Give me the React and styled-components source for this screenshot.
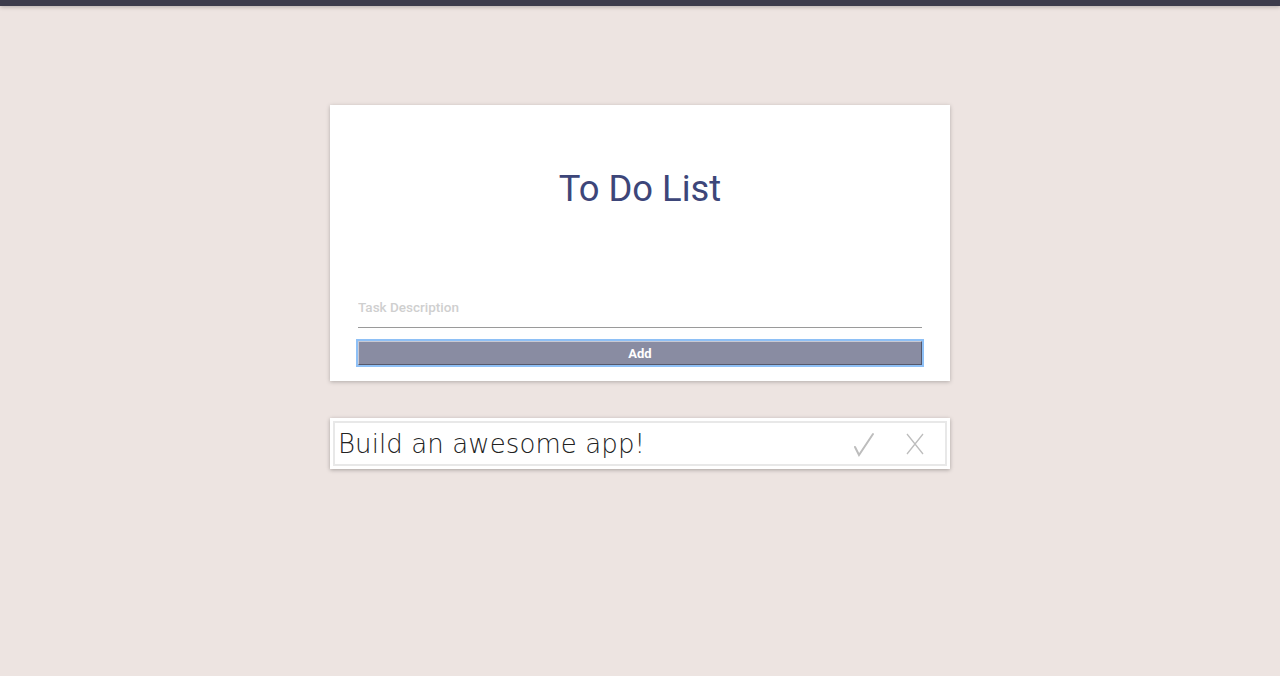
import React from "react";
import styled, { createGlobalStyle } from "styled-components";

const Global = createGlobalStyle`
  html, body {
    margin: 0;
    padding: 0;
    background: #ede4e1;
    font-family: Roboto, "Liberation Sans", sans-serif;
  }
`;

const TopBar = styled.div`
  height: 6px;
  background: #3c3c4c;
  box-shadow: 0 1px 4px rgba(0, 0, 0, 0.25);
`;

const Page = styled.div`
  display: flex;
  flex-direction: column;
  align-items: center;
  padding-top: 99px;
  min-height: 570px;
`;

const Card = styled.div`
  width: 620px;
  box-sizing: border-box;
  background: #fff;
  padding: 0 28px 16px;
  box-shadow: 0 1px 4px rgba(0, 0, 0, 0.25);
`;

const Title = styled.h1`
  margin: 63px 0 78px;
  text-align: center;
  font-family: Roboto, sans-serif;
  font-weight: 400;
  font-size: 36.4px;
  line-height: 42px;
  color: #3d4679;
`;

const Input = styled.input`
  display: block;
  width: 100%;
  box-sizing: border-box;
  height: 40px;
  border: none;
  border-bottom: 1px solid #9a9a9a;
  outline: none;
  padding: 0 0 2px;
  font-family: Roboto, sans-serif;
  font-size: 13.5px;
  font-weight: 500;
  color: #333;
  &::placeholder {
    color: #cfcfcf;
  }
`;

const AddButton = styled.button`
  display: block;
  width: 100%;
  margin-top: 13px;
  height: 24px;
  box-sizing: border-box;
  background: #898ca2;
  color: #fff;
  font-family: Roboto, sans-serif;
  font-weight: 700;
  font-size: 13px;
  border: 1px solid;
  border-color: #c8c9d3 #55576a #55576a #c8c9d3;
  outline: 2px solid #8ec0f6;
  outline-offset: 0;
  padding: 0;
`;

const Task = styled.div`
  width: 620px;
  box-sizing: border-box;
  margin-top: 37px;
  background: #fff;
  padding: 3px;
  box-shadow: 0 1px 4px rgba(0, 0, 0, 0.3);
`;

const TaskInner = styled.div`
  display: flex;
  align-items: center;
  height: 45px;
  box-sizing: border-box;
  border: 2px solid #e8e8e8;
  padding: 0 20px 0 3px;
`;

const TaskText = styled.span`
  flex: 1;
  font-family: "DejaVu Sans", sans-serif;
  font-weight: 200;
  font-size: 26px;
  letter-spacing: 0.1px;
  color: #222;
`;

const IconBtn = styled.span`
  display: inline-flex;
  margin-left: ${(p) => p.gap}px;
  color: #bdbdbd;
`;

export default function App() {
  return (
    <>
      <Global />
      <TopBar />
      <Page>
        <Card>
          <Title>To Do List</Title>
          <Input placeholder="Task Description" />
          <AddButton>Add</AddButton>
        </Card>
        <Task>
          <TaskInner>
            <TaskText>Build an awesome app!</TaskText>
            <IconBtn gap={0}>
              <svg width="26" height="26" viewBox="0 0 26 26" fill="none" stroke="#bdbdbd" strokeWidth="2" strokeLinecap="round">
                <path d="M4 16 L8 24 L22 3" />
              </svg>
            </IconBtn>
            <IconBtn gap={28}>
              <svg width="20" height="22" viewBox="0 0 20 22" fill="none" stroke="#bdbdbd" strokeWidth="1.3">
                <path d="M2 1 L18 21 M18 1 L2 21" />
              </svg>
            </IconBtn>
          </TaskInner>
        </Task>
      </Page>
    </>
  );
}
